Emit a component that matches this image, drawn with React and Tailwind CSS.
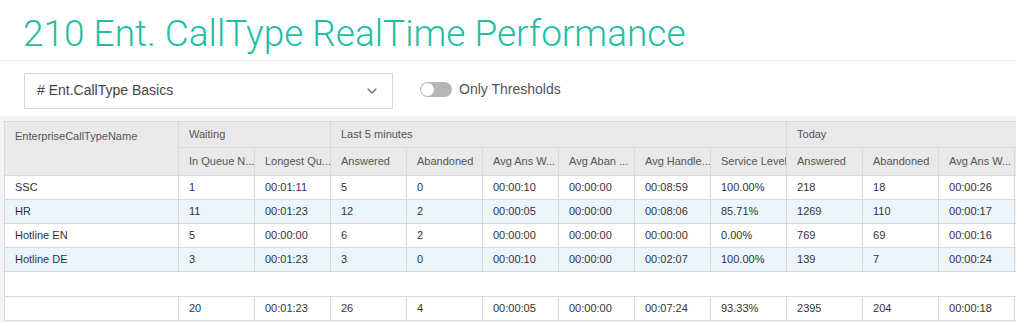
import { ChevronDown } from "lucide-react";

const rows = [
    { name: "SSC", q: "1", lq: "00:01:11", ans: "5", ab: "0", aaw: "00:00:10", aab: "00:00:00", ah: "00:08:59", sl: "100.00%", tans: "218", tab: "18", taaw: "00:00:26", taab: "00:00:02" },
    { name: "HR", q: "11", lq: "00:01:23", ans: "12", ab: "2", aaw: "00:00:05", aab: "00:00:00", ah: "00:08:06", sl: "85.71%", tans: "1269", tab: "110", taaw: "00:00:17", taab: "00:00:03" },
    { name: "Hotline EN", q: "5", lq: "00:00:00", ans: "6", ab: "2", aaw: "00:00:00", aab: "00:00:00", ah: "00:00:00", sl: "0.00%", tans: "769", tab: "69", taaw: "00:00:16", taab: "00:00:01" },
    { name: "Hotline DE", q: "3", lq: "00:01:23", ans: "3", ab: "0", aaw: "00:00:10", aab: "00:00:00", ah: "00:02:07", sl: "100.00%", tans: "139", tab: "7", taaw: "00:00:24", taab: "00:00:00" },
];

const total = { name: "", q: "20", lq: "00:01:23", ans: "26", ab: "4", aaw: "00:00:05", aab: "00:00:00", ah: "00:07:24", sl: "93.33%", tans: "2395", tab: "204", taaw: "00:00:18", taab: "00:00:02" };

const keys = ["name", "q", "lq", "ans", "ab", "aaw", "aab", "ah", "sl", "tans", "tab", "taaw", "taab"];

const subHeads = [
    "In Queue N...",
    "Longest Qu...",
    "Answered",
    "Abandoned",
    "Avg Ans W...",
    "Avg Aban ...",
    "Avg Handle...",
    "Service Level",
    "Answered",
    "Abandoned",
    "Avg Ans W...",
    "Avg Aban ...",
];

const cell = "border border-[#d9d9d9] px-[10px] text-left font-normal whitespace-nowrap overflow-hidden";

export default function App() {
    return (
        <div
            className="w-[1016px] h-[322px] overflow-hidden bg-white"
            style={{ fontFamily: '"Liberation Sans", Arial, sans-serif' }}
        >
            <div className="h-[61px] border-b border-[#e8e8e8] pl-[23px] pt-[12px]">
                <h1
                    className="text-[37px] leading-[44px] font-light text-[#21bfa2]"
                    style={{ fontFamily: 'Roboto, "Liberation Sans", sans-serif' }}
                >
                    210 Ent. CallType RealTime Performance
                </h1>
            </div>

            <div className="h-[55px] flex items-center pl-[24px] pt-[4px]">
                <div className="w-[369px] h-[36px] border border-[#d5d5d5] bg-white flex items-center justify-between pl-[12px] pr-[12px]">
                    <span className="text-[14px] text-[#444]">
                        # Ent.CallType Basics
                    </span>
                    <ChevronDown size={16} strokeWidth={1.75} className="text-[#666]" />
                </div>
                <div className="ml-[27px] flex items-center gap-[7px] -mt-[2px]">
                    <div className="w-[32px] h-[15px] rounded-full bg-[#b5b5b5] relative">
                        <div className="absolute left-[1px] top-[1px] w-[13px] h-[13px] rounded-full bg-white" />
                    </div>
                    <span className="text-[14px] text-[#555]">Only Thresholds</span>
                </div>
            </div>

            <div className="bg-[#f3f3f3] h-[206px] pt-[5px] pl-[4px]">
                <table className="table-fixed border-collapse text-[11px] w-[1086px]">
                    <colgroup>
                        <col className="w-[174px]" />
                        {subHeads.map((_, i) => (
                            <col key={i} className="w-[76px]" />
                        ))}
                    </colgroup>
                    <thead className="bg-[#e9e9e9] text-[#555]">
                        <tr className="h-[26px]">
                            <th rowSpan={2} className={cell + " align-top pt-[6px]"}>
                                EnterpriseCallTypeName
                            </th>
                            <th colSpan={2} className={cell}>Waiting</th>
                            <th colSpan={6} className={cell}>Last 5 minutes</th>
                            <th colSpan={4} className={cell}>Today</th>
                        </tr>
                        <tr className="h-[28px]">
                            {subHeads.map((h, i) => (
                                <th key={i} className={cell + (h === "Service Level" ? " px-[9px]" : "")}>{h}</th>
                            ))}
                        </tr>
                    </thead>
                    <tbody className="text-[#333]">
                        {rows.map((r, i) => (
                            <tr key={r.name} className={"h-[24px] " + (i % 2 ? "bg-[#ebf6fb]" : "bg-white")}>
                                {keys.map((k) => (
                                    <td key={k} className={cell}>{r[k]}</td>
                                ))}
                            </tr>
                        ))}
                        <tr className="h-[25px] bg-white">
                            <td colSpan={13} className="border-l border-[#d9d9d9]" />
                        </tr>
                        <tr className="h-[24px] bg-white">
                            {keys.map((k) => (
                                <td key={k} className={cell}>{total[k]}</td>
                            ))}
                        </tr>
                    </tbody>
                </table>
            </div>
        </div>
    );
}
